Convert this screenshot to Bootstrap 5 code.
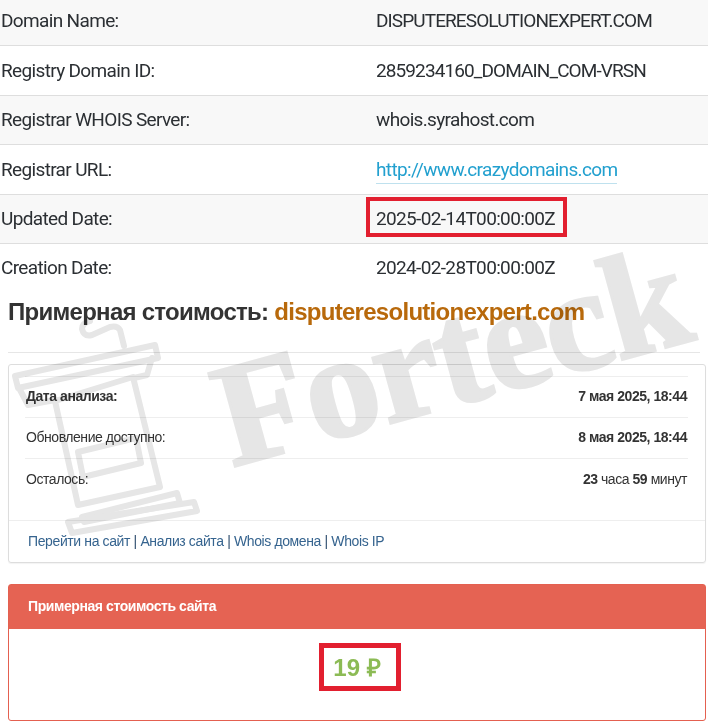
<!DOCTYPE html>
<html lang="ru">
<head>
<meta charset="utf-8">
<title>Whois</title>
<link href="https://cdn.jsdelivr.net/npm/bootstrap@5.3.0/dist/css/bootstrap.min.css" rel="stylesheet">
<style>
html,body{height:724px;overflow:hidden;background:#fff}
body{position:relative;font-family:"Liberation Sans",Arial,sans-serif;color:#333}
.whois-table{font-family:Roboto,sans-serif;font-size:19px;margin:-4px 0 0;color:#2b2f33;--bs-table-border-color:#dedede}
.whois-table td{height:49.5px;padding:1px 1px 0;vertical-align:middle;line-height:20px;letter-spacing:-.65px}
.whois-table td:first-child{width:375px}
.whois-table td.caps-cell{letter-spacing:-.9px}
.whois-table tr:nth-child(odd) td{background:#f8f8f8}
.whois-table tr:last-child td{border-bottom:0;height:48px}
.whois-link{color:#22a0cf;text-decoration:none;border-bottom:1px solid #bfe1ee;padding-bottom:2px}
.mark-box{position:relative;display:inline-block}
.mark-box::after{content:"";position:absolute;border:4px solid #e21f2f}
.mark-date::after{left:-10px;right:-12px;top:-12px;bottom:-8px}
.mark-price::after{left:-14px;right:-20px;top:-11px;bottom:-9px;border-width:5px}
.price-title{font-size:24px;font-weight:700;margin:0;padding:4px 8px 0;line-height:32px;color:#333;letter-spacing:-.72px}
.price-domain{color:#b8690b}
.title-rule{margin:24px 8px 11px 8px;border-top:1px solid #e6e6e6;opacity:1}
.info-box{margin:0 2px 0 8px;border:1px solid #ddd;border-radius:3px;height:199px;padding:11px 18px 0 17px;font-size:14px;letter-spacing:-.45px;color:#333;box-shadow:0 1px 1px rgba(0,0,0,.05)}
.info-row{height:41.3px;border-top:1px solid #eee;margin:0 -1px;padding:0 1px}
.info-foot{margin:21px -18px 0 -17px;border-top:1px solid #eee;padding:11px 19px;line-height:18px;font-size:14px;letter-spacing:-.38px;color:#2f4f6f}
.info-foot a{color:#36648f;text-decoration:none}
.cost-box{margin:21px 2px 0 8px;border:1px solid #e46050;border-radius:3px;height:137px;overflow:visible}
.cost-head{background:#e56353;color:#fff;height:44px;padding:0 19px;font-size:14px;letter-spacing:-.42px;font-weight:700;line-height:43px}
.cost-val{color:#8cbb55;font-size:24px;font-weight:700;text-align:center;line-height:28px;padding-top:25px}
.watermark{position:absolute;left:0;top:0;width:708px;height:724px;pointer-events:none;mix-blend-mode:multiply}
</style>
</head>
<body>
<table class="table whois-table">
<tbody>
<tr><td>Domain Name:</td><td class="caps-cell">DISPUTERESOLUTIONEXPERT.COM</td></tr>
<tr><td>Registry Domain ID:</td><td class="caps-cell">2859234160_DOMAIN_COM-VRSN</td></tr>
<tr><td>Registrar WHOIS Server:</td><td>whois.syrahost.com</td></tr>
<tr><td>Registrar URL:</td><td><a class="whois-link" href="#">http://www.crazydomains.com</a></td></tr>
<tr><td>Updated Date:</td><td><span class="mark-box mark-date">2025-02-14T00:00:00Z</span></td></tr>
<tr><td>Creation Date:</td><td>2024-02-28T00:00:00Z</td></tr>
</tbody>
</table>
<h1 class="price-title">Примерная стоимость: <span class="price-domain">disputeresolutionexpert.com</span></h1>
<hr class="title-rule">
<div class="info-box">
  <div class="info-row d-flex justify-content-between align-items-center"><b>Дата анализа:</b><b>7 мая 2025, 18:44</b></div>
  <div class="info-row d-flex justify-content-between align-items-center"><span>Обновление доступно:</span><b>8 мая 2025, 18:44</b></div>
  <div class="info-row d-flex justify-content-between align-items-center"><span>Осталось:</span><span><b>23</b> часа <b>59</b> минут</span></div>
  <div class="info-foot"><a href="#">Перейти на сайт</a> | <a href="#">Анализ сайта</a> | <a href="#">Whois домена</a> | <a href="#">Whois IP</a></div>
</div>
<div class="cost-box">
  <div class="cost-head">Примерная стоимость сайта</div>
  <div class="cost-val"><span class="mark-box mark-price">19 ₽</span></div>
</div>
<svg class="watermark" viewBox="0 0 708 724" aria-hidden="true">
  <text transform="translate(232 467) rotate(-15.4)" font-family="Liberation Serif" font-weight="700" font-size="147" letter-spacing="-1.2" fill="#e6e6e6" stroke="#e6e6e6" stroke-width="3">Forteck</text>
  <g fill="none" stroke="#e6e6e6" stroke-width="6" stroke-linejoin="round" stroke-linecap="round">
    <path d="M15 376 155 345 158 358 18 388Z"/>
    <path d="M19 388 28 405 55 400 M152 358 147 375 134 378"/>
    <path d="M124 346 120 330Q117 325 110 327L92 335Q84 337 82 329Q82 323 90 321"/>
    <path d="M55 401 133 377 160 487 78 505Z"/>
    <path d="M78 452 136 438 141 463 83 477Z"/>
    <path d="M82 517 177 493 180 503 84 522"/>
    <path d="M68 522 194 502 197 511 72 533Z"/>
  </g>
</svg>
</body>
</html>
